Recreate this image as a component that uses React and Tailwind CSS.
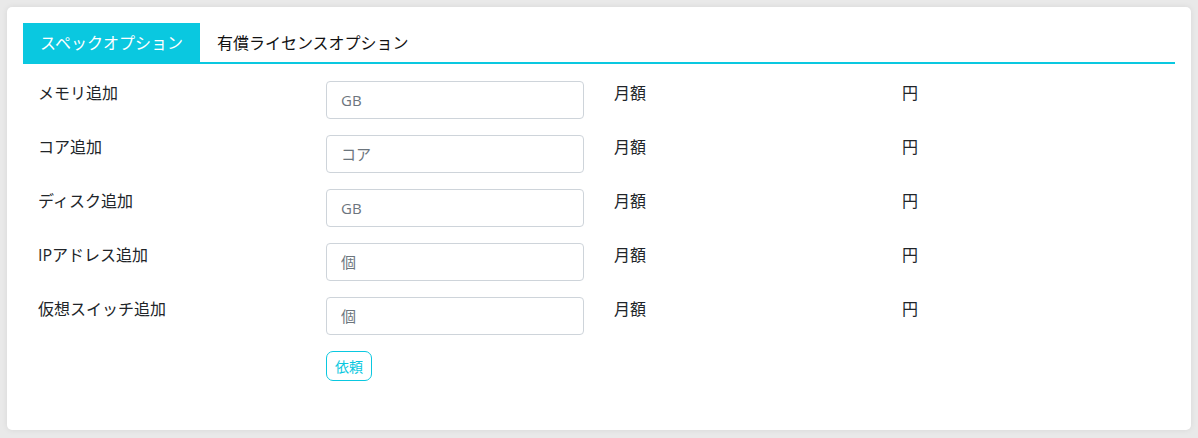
import React from "react";

const rows = [
  { label: "メモリ追加", unit: "GB" },
  { label: "コア追加", unit: "コア" },
  { label: "ディスク追加", unit: "GB" },
  { label: "IPアドレス追加", unit: "個" },
  { label: "仮想スイッチ追加", unit: "個" },
];

const font = { fontFamily: '"Open Sans", "Noto Sans CJK JP", sans-serif' };

export default function App() {
  return (
    <div className="min-h-screen bg-[#e9e9e9] p-[7px] text-[#212529]" style={font}>
      <div className="bg-white rounded-[5px] shadow-[0_0_6px_rgba(0,0,0,0.08)] px-4 pt-4 pb-[49px]">
        {/* Tabs */}
        <div className="flex border-b-2 border-[#0ac8e0]">
          <button className="h-[39px] px-[17px] bg-[#0ac8e0] text-white text-[16px]">
            スペックオプション
          </button>
          <button className="h-[39px] px-[17px] text-[16px] text-[#111]">
            有償ライセンスオプション
          </button>
        </div>

        <div className="pt-[17px]">
          {rows.map((r, i) => (
            <div key={i} className="grid grid-cols-4 mb-4">
              <div className="px-[15px] pt-[1px] text-[16px] leading-[22px]">{r.label}</div>
              <div className="px-[15px]">
                <input
                  placeholder={r.unit}
                  className="w-full h-[38px] border border-[#ced4da] rounded-[4px] px-[14px] text-[15px] placeholder-[#6c757d] outline-none"
                  style={font}
                />
              </div>
              <div className="px-[15px] pt-[1px] text-[16px] leading-[22px]">月額</div>
              <div className="px-[15px] pt-[1px] text-[16px] leading-[22px]">円</div>
            </div>
          ))}
          <div className="grid grid-cols-4">
            <div />
            <div className="px-[15px]">
              <button className="h-[30px] px-[8px] border border-[#0ac8e0] rounded-[7px] text-[#0ac8e0] text-[14px]">
                依頼
              </button>
            </div>
          </div>
        </div>
      </div>
    </div>
  );
}
